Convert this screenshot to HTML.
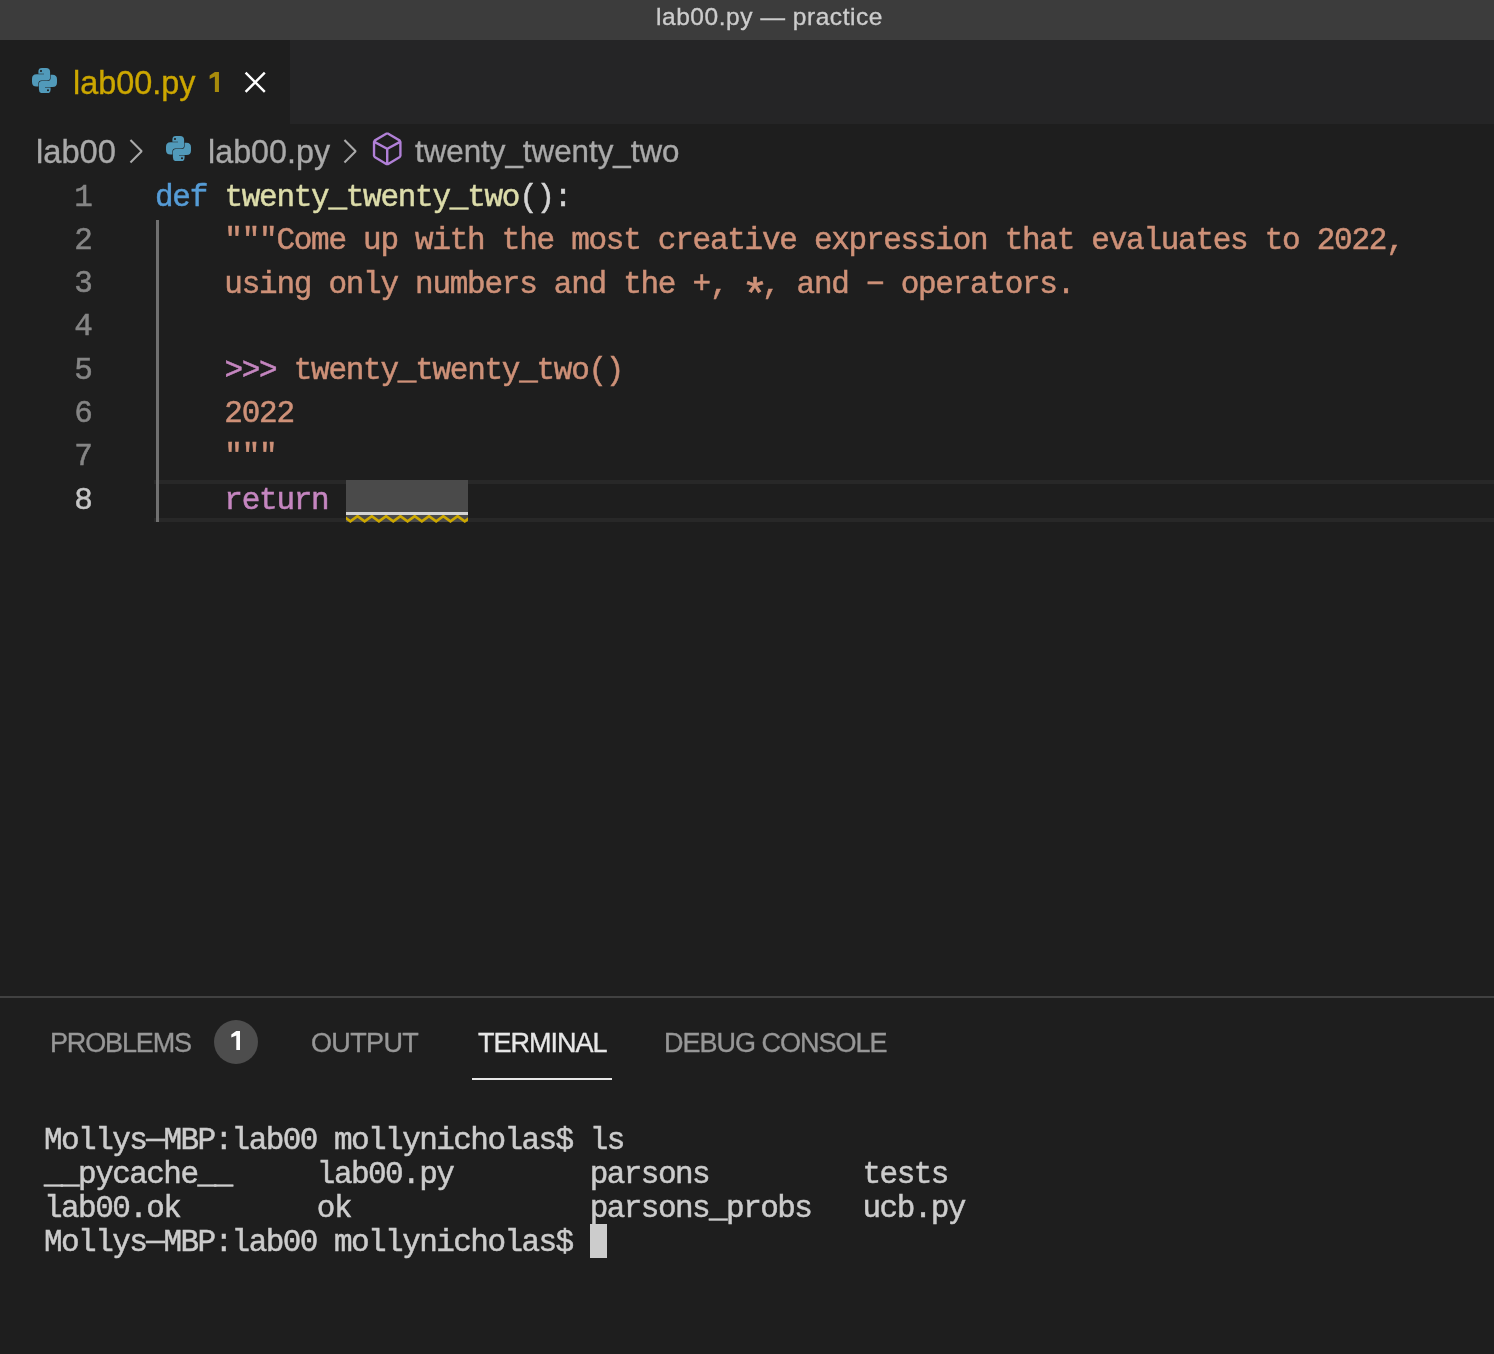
<!DOCTYPE html>
<html><head><meta charset="utf-8">
<style>
html,body{margin:0;padding:0;width:1494px;height:1354px;overflow:hidden;background:#1e1e1e;}
*{box-sizing:border-box;}
.abs{position:absolute;will-change:transform;}
.ui{font-family:"Liberation Sans",sans-serif;white-space:pre;line-height:1;-webkit-text-stroke:0.35px currentColor;}
.mono{font-family:"Liberation Mono",monospace;white-space:pre;-webkit-text-stroke:0.5px currentColor;}
#title{left:0;top:0;width:1494px;height:40px;background:#3c3c3c;}
#tabs{left:0;top:40px;width:1494px;height:84px;background:#252526;}
#tab{left:0;top:40px;width:290px;height:84px;background:#1e1e1e;}
.code{left:155.3px;font-size:31px;letter-spacing:-1.263px;line-height:43.2px;height:43.2px;}
.ln{left:0;width:91.5px;text-align:right;font-size:31px;letter-spacing:-1.263px;line-height:43.2px;height:43.2px;color:#858585;}
.term{left:44px;font-size:31px;letter-spacing:-1.55px;line-height:34px;height:34px;color:#cccccc;}
.kw{color:#569cd6}.fn{color:#dcdcaa}.p{color:#d4d4d4}.s{color:#ce9178}.ctl{color:#c586c0}
</style></head><body>
<div id="title" class="abs"></div>
<div class="abs ui" style="left:656px;top:4.5px;font-size:24.5px;letter-spacing:0.55px;color:#cccccc;">lab00.py — practice</div>

<div id="tabs" class="abs"></div>
<div id="tab" class="abs"></div>
<svg class="abs" style="left:32px;top:68px" width="25" height="25.3" viewBox="0 0 25 25.3">
 <g fill="#519aba">
 <path d="M9.9 0H14.1Q18.1 0 18.1 4V9.4Q18.1 12.4 15.1 12.4H9.4Q6.4 12.4 6.4 15.4V18.5H4.5Q0 18.5 0 14V10.75Q0 6.25 4.5 6.25H12V5.7H6.4V3.5Q6.4 0 9.9 0Z"/>
 <path transform="rotate(180 12.5 12.65)" d="M9.9 0H14.1Q18.1 0 18.1 4V9.4Q18.1 12.4 15.1 12.4H9.4Q6.4 12.4 6.4 15.4V18.5H4.5Q0 18.5 0 14V10.75Q0 6.25 4.5 6.25H12V5.7H6.4V3.5Q6.4 0 9.9 0Z"/>
 </g>
 <circle cx="9" cy="3.06" r="1.05" fill="#1e1e1e"/>
 <circle cx="16" cy="22.2" r="1.05" fill="#1e1e1e"/>
</svg>
<div class="abs ui" style="left:73px;top:66.5px;font-size:32.4px;color:#cca700;">lab00.py</div>
<svg class="abs" style="left:209px;top:72px" width="10.4" height="20.2" viewBox="0 0 9.3 19.3"><path fill="#a88b0c" d="M5.3 0H9.2V19.3H5.3V4.4L0.3 6.6V3.4Z"/></svg>
<svg class="abs" style="left:236px;top:63.2px" width="38.4" height="38.4" viewBox="0 0 16 16"><path fill="#ffffff" d="M8 8.707l3.646 3.647.708-.707L8.707 8l3.647-3.646-.707-.708L8 7.293 4.354 3.646l-.707.708L7.293 8l-3.646 3.646.707.708L8 8.707z"/></svg>

<!-- breadcrumbs -->
<div class="abs ui" style="left:35.5px;top:135.5px;font-size:32.7px;color:#a9a9a9;">lab00</div>
<svg class="abs" style="left:116px;top:131.5px" width="38.4" height="38.4" viewBox="0 0 16 16"><path fill="#a9a9a9" d="M10.072 8.024L5.715 3.667l.618-.62L11 7.716v.618L6.333 13l-.618-.619 4.357-4.357z"/></svg>
<svg class="abs" style="left:165.7px;top:135.8px" width="25" height="25.3" viewBox="0 0 25 25.3">
 <g fill="#519aba">
 <path d="M9.9 0H14.1Q18.1 0 18.1 4V9.4Q18.1 12.4 15.1 12.4H9.4Q6.4 12.4 6.4 15.4V18.5H4.5Q0 18.5 0 14V10.75Q0 6.25 4.5 6.25H12V5.7H6.4V3.5Q6.4 0 9.9 0Z"/>
 <path transform="rotate(180 12.5 12.65)" d="M9.9 0H14.1Q18.1 0 18.1 4V9.4Q18.1 12.4 15.1 12.4H9.4Q6.4 12.4 6.4 15.4V18.5H4.5Q0 18.5 0 14V10.75Q0 6.25 4.5 6.25H12V5.7H6.4V3.5Q6.4 0 9.9 0Z"/>
 </g>
 <circle cx="9" cy="3.06" r="1.05" fill="#1e1e1e"/>
 <circle cx="16" cy="22.2" r="1.05" fill="#1e1e1e"/>
</svg>
<div class="abs ui" style="left:207.5px;top:136px;font-size:32.3px;color:#a9a9a9;">lab00.py</div>
<svg class="abs" style="left:330px;top:131.5px" width="38.4" height="38.4" viewBox="0 0 16 16"><path fill="#a9a9a9" d="M10.072 8.024L5.715 3.667l.618-.62L11 7.716v.618L6.333 13l-.618-.619 4.357-4.357z"/></svg>
<svg class="abs" style="left:368.4px;top:130px" width="38.4" height="38.4" viewBox="0 0 16 16"><path fill="#b180d7" d="M13.51 4l-5-3h-1l-5 3-.49.86v6l.49.85 5 3h1l5-3 .49-.85v-6L13.51 4zm-6 9.56l-4.5-2.7V5.7l4.5 2.45v5.41zM3.27 4.7l4.74-2.84 4.74 2.84-4.74 2.59L3.27 4.7zm9.74 6.16l-4.5 2.7V8.15l4.5-2.45v5.16z"/></svg>
<div class="abs ui" style="left:414.5px;top:135.5px;font-size:31.3px;color:#a9a9a9;">twenty_twenty_two</div>

<!-- editor -->
<div class="abs" style="left:153.6px;top:480px;width:1340.4px;height:42px;border-top:4px solid #282828;border-bottom:4px solid #282828;"></div>
<div class="abs" style="left:156px;top:220.2px;width:2.8px;height:301.8px;background:#707070;"></div>
<div class="abs" style="left:346px;top:480px;width:121.5px;height:42px;background:#4a4a4a;"></div>
<div class="abs" style="left:346px;top:511.8px;width:121.5px;height:3px;background:#d4d4d4;"></div>
<svg class="abs" style="left:346px;top:514.5px;overflow:hidden" width="121.5" height="7.5" viewBox="0 0 121.5 7.5"><path fill="none" stroke="#cca700" stroke-width="2.7" d="M-2.80 1.2 L4.35 6.3 L11.50 1.2 L18.65 6.3 L25.80 1.2 L32.95 6.3 L40.10 1.2 L47.25 6.3 L54.40 1.2 L61.55 6.3 L68.70 1.2 L75.85 6.3 L83.00 1.2 L90.15 6.3 L97.30 1.2 L104.45 6.3 L111.60 1.2 L118.75 6.3 L125.90 1.2 L133.05 6.3"/></svg>

<div class="abs mono ln" style="top:175.8px">1</div>
<div class="abs mono ln" style="top:219.0px">2</div>
<div class="abs mono ln" style="top:262.2px">3</div>
<div class="abs mono ln" style="top:305.4px">4</div>
<div class="abs mono ln" style="top:348.6px">5</div>
<div class="abs mono ln" style="top:391.8px">6</div>
<div class="abs mono ln" style="top:435.0px">7</div>
<div class="abs mono ln" style="top:479.4px;color:#c6c6c6">8</div>

<div class="abs mono code" style="top:176.2px"><span class="kw">def</span> <span class="fn">twenty_twenty_two</span><span class="p">():</span></div>
<div class="abs mono code s" style="top:219.4px">    """Come up with the most creative expression that evaluates to 2022,</div>
<div class="abs mono code s" style="top:262.6px">    using only numbers and the +, <span style="display:inline-block;transform:translate(0.5px,12px) scale(1.45)">*</span>, and − operators.</div>
<div class="abs mono code s" style="top:349.0px">    <span class="ctl">&gt;&gt;&gt;</span> twenty_twenty_two()</div>
<div class="abs mono code s" style="top:392.2px">    2022</div>
<div class="abs mono code s" style="top:435.4px">    """</div>
<div class="abs mono code ctl" style="top:478.6px">    return</div>

<!-- panel -->
<div class="abs" style="left:0;top:996px;width:1494px;height:2px;background:#414141;"></div>
<div class="abs ui" style="left:50px;top:1030px;font-size:27px;letter-spacing:-1.14px;color:#979797;">PROBLEMS</div>
<div class="abs" style="left:214px;top:1020px;width:44px;height:44px;border-radius:22px;background:#4d4d4d;"></div>
<svg class="abs" style="left:230.9px;top:1030.8px" width="9.3" height="19.3" viewBox="0 0 9.3 19.3"><path fill="#ffffff" d="M5.3 0H9.2V19.3H5.3V4.4L0.3 6.6V3.4Z"/></svg>
<div class="abs ui" style="left:310.5px;top:1030px;font-size:27px;letter-spacing:-0.64px;color:#979797;">OUTPUT</div>
<div class="abs ui" style="left:478px;top:1030px;font-size:27px;letter-spacing:-1.01px;color:#e7e7e7;">TERMINAL</div>
<div class="abs" style="left:472px;top:1077.5px;width:140px;height:2.4px;background:#e7e7e7;"></div>
<div class="abs ui" style="left:664px;top:1030px;font-size:27px;letter-spacing:-1px;color:#979797;">DEBUG CONSOLE</div>

<div class="abs mono term" style="top:1124.1px">Mollys<span style="position:relative;top:-1.5px">—</span>MBP:lab00 mollynicholas$ ls</div>
<div class="abs mono term" style="top:1158px">__pycache__     lab00.py        parsons         tests</div>
<div class="abs mono term" style="top:1191.9px">lab00.ok        ok              parsons_probs   ucb.py</div>
<div class="abs mono term" style="top:1225.9px">Mollys<span style="position:relative;top:-1.5px">—</span>MBP:lab00 mollynicholas$ </div>
<div class="abs" style="left:590px;top:1224.1px;width:17.1px;height:33.5px;background:#cccccc;"></div>
</body></html>
